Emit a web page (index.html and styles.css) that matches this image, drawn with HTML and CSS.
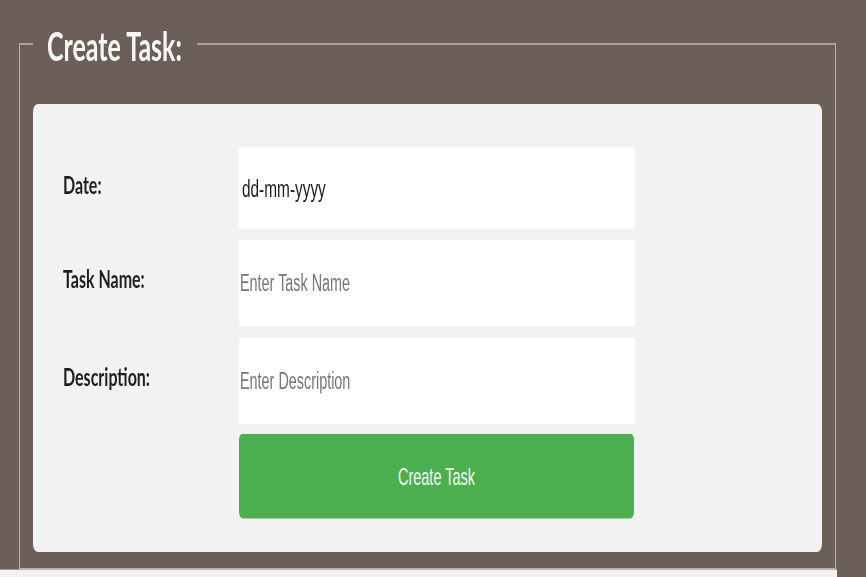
FILE: index.html
```html
<!DOCTYPE html>
<html lang="en">
<head>
<meta charset="utf-8">
<title>Create Task</title>
<link rel="stylesheet" href="styles.css">
</head>
<body>
<div class="page">
  <fieldset class="panel">
    <legend class="panel-title">Create Task:</legend>
    <form class="card">
      <label class="field-label" for="date">Date:</label>
      <input class="field field-date" id="date" type="text" value="dd-mm-yyyy">
      <label class="field-label" for="task">Task Name:</label>
      <input class="field field-tall" id="task" type="text" placeholder="Enter Task Name">
      <label class="field-label" for="desc">Description:</label>
      <input class="field field-tall" id="desc" type="text" placeholder="Enter Description">
      <span class="spacer"></span>
      <button class="submit" type="button">Create Task</button>
    </form>
  </fieldset>
  <div class="band"></div>
</div>
</body>
</html>
```

FILE: styles.css
```css
html, body {
  margin: 0;
  padding: 0;
  background: #6c5f59;
}

body {
  width: 866px;
  height: 577px;
  overflow: hidden;
}

.page {
  width: 866px;
  height: 360.6px;
  padding-top: 12.8px;
  box-sizing: border-box;
  transform: scaleY(1.6);
  transform-origin: 0 0;
  display: flex;
  flex-direction: column;
}

.panel {
  margin: 0 0 0 19px;
  width: 817px;
  box-sizing: border-box;
  border: 1px solid #bcb2ad;
  padding: 0 13px 10.5px 13px;
  min-inline-size: 0;
}

.panel-title {
  padding: 0 15px 0 14px;
  font-family: Lato, "Liberation Sans", sans-serif;
  font-weight: 700;
  font-size: 25px;
  line-height: 30px;
  color: #f7f7f7;
}

.card {
  margin-top: 22.2px;
  background: #f2f2f2;
  border-radius: 5px;
  padding: 26.9px 0 20.6px 30px;
  display: grid;
  grid-template-columns: 176px 396px;
  grid-template-rows: 51.25px 54.4px 54.4px 52.5px;
  row-gap: 6.5px;
}

.field-label {
  align-self: center;
  padding-bottom: 6px;
  font-family: Lato, "Liberation Sans", sans-serif;
  font-weight: 700;
  font-size: 16px;
  color: #1f1f1f;
}

.field {
  margin: 0;
  border: 0;
  border-radius: 0;
  outline: none;
  background: #ffffff;
  height: 100%;
  width: 100%;
  box-sizing: border-box;
  padding: 0 0 0 1px;
  font-family: "Liberation Sans", Arial, sans-serif;
  color: #1e1e1e;
}

.field-date {
  padding-left: 3px;
  font-size: 15.4px;
}

.field-tall {
  font-size: 14.4px;
}

.field::placeholder {
  color: #767676;
  opacity: 1;
}

.submit {
  margin: 0;
  border: 0;
  border-radius: 4px;
  background: #4caf50;
  color: #f4fbf2;
  width: 395px;
  height: 100%;
  font-family: "Liberation Sans", Arial, sans-serif;
  font-size: 14.5px;
  cursor: pointer;
}

.band {
  margin-top: auto;
  width: 837px;
  height: 5px;
  background: #f3f1ef;
}
```
